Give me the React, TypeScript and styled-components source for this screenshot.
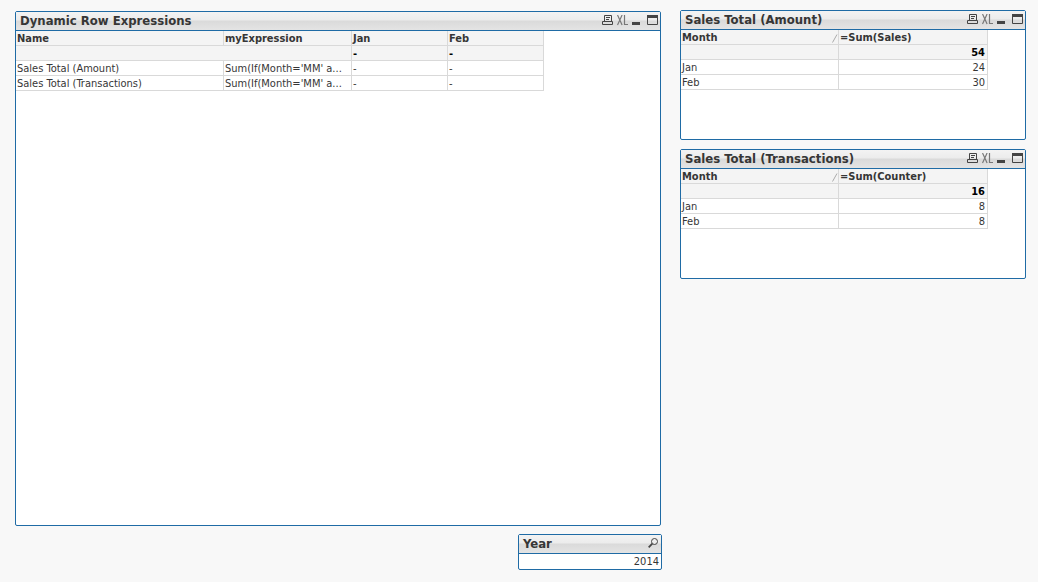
import React from "react";
import styled, { createGlobalStyle } from "styled-components";

const Global = createGlobalStyle`
  * { box-sizing: border-box; }
  body {
    margin: 0;
    background: #f8f8f8;
    color: #363636;
    font: 11px/14px "DejaVu Sans Condensed", "DejaVu Sans", Tahoma, sans-serif;
  }
`;

const Sheet = styled.main`
  display: grid;
  grid-template-columns: 647fr 346fr;
  gap: 18px;
  min-height: 100vh;
  padding: 10px 12px 12px 15px;
`;

const MainColumn = styled.div`
  display: flex;
  flex-direction: column;
  gap: 8px;
  min-width: 0;
  padding-top: 1px;
`;

const SideColumn = styled.div`
  display: flex;
  flex-direction: column;
  gap: 9px;
  min-width: 0;
`;

const Panel = styled.section<{ $grow?: boolean }>`
  display: flex;
  flex-direction: column;
  flex: ${(p) => (p.$grow ? "1" : "none")};
  min-height: 130px;
  margin-right: ${(p) => (p.$grow ? "1px" : "0")};
  background: #ffffff;
  border: 1px solid #1f6ba5;
  border-radius: 2px;
`;

const ListBox = styled.section`
  align-self: flex-end;
  width: 144px;
  background: #ffffff;
  border: 1px solid #1f6ba5;
  border-radius: 2px;
`;

const Caption = styled.header`
  display: flex;
  align-items: center;
  justify-content: space-between;
  height: 19px;
  padding: 0 2px 0 4px;
  border-bottom: 1px solid #1f6ba5;
  background: linear-gradient(#f3f3f3 0, #ececec 8px, #dadada 9px, #e4e4e4 100%);
`;

const Title = styled.h2`
  margin: 0;
  font-size: 13px;
  line-height: 18px;
  font-weight: 700;
  white-space: nowrap;
`;

const Tools = styled.div`
  display: flex;
  align-items: center;
  gap: 4px;
`;

const IconButton = styled.button`
  display: block;
  padding: 0 0 1px;
  border: 0;
  background: none;
  color: #444444;
  cursor: pointer;

  svg { display: block; }
`;

const Table = styled.table`
  table-layout: fixed;
  border-collapse: separate;
  border-spacing: 0;
  width: 0;
`;

const Row = styled.tr<{ $shaded?: boolean }>`
  height: 15px;
  background: ${(p) => (p.$shaded ? "#f4f4f4" : "#ffffff")};
`;

const cell = `
  height: 15px;
  padding: 2px 2px 0 1px;
  border-right: 1px solid #d9d9d9;
  border-bottom: 1px solid #d9d9d9;
  line-height: 12px;
  overflow: hidden;
  white-space: nowrap;
`;

const HeadCell = styled.th<{ $sorted?: boolean }>`
  ${cell}
  padding-right: ${(p) => (p.$sorted ? "0" : "2px")};
  text-align: left;
  font-weight: 700;
`;

const HeadContent = styled.div`
  display: flex;
  align-items: center;
  justify-content: space-between;
`;

const Cell = styled.td<{ $align?: "right"; $total?: boolean }>`
  ${cell}
  text-align: ${(p) => p.$align ?? "left"};
  font-weight: ${(p) => (p.$total ? 700 : 400)};
  color: ${(p) => (p.$total ? "#000000" : "inherit")};
`;

const Option = styled.button`
  display: block;
  width: 100%;
  height: 15px;
  padding: 0 2px;
  border: 0;
  background: none;
  color: inherit;
  font: inherit;
  text-align: right;
`;

const PrintIcon = () => (
  <svg width="11" height="11" viewBox="0 0 11 11" fill="none" stroke="currentColor">
    <path d="M2.5 7V.5h7V7M4 2.5h4M4 4.5h3M.5 9.500V6.500h10v3z" />
  </svg>
);

const ExcelIcon = () => (
  <svg width="11" height="11" viewBox="0 0 11 11" fill="none" stroke="#777777" strokeWidth="1.200">
    <path d="M.5 0l4.600 10M5.100 0L.5 10M7.500 0v9.500H11" />
  </svg>
);

const MinimizeIcon = () => (
  <svg width="11" height="11" viewBox="0 0 11 11" fill="currentColor">
    <path d="M0 7h8v3H0z" />
  </svg>
);

const MaximizeIcon = () => (
  <svg width="11" height="11" viewBox="0 0 11 11">
    <path d="M.5 0v9.500h10V0z" fill="none" stroke="currentColor" />
    <path d="M0 0h11v3H0z" fill="currentColor" />
  </svg>
);

const SearchIcon = () => (
  <svg width="11" height="11" viewBox="0 0 11 11" fill="none" stroke="currentColor">
    <circle cx="6.500" cy="3.500" r="3" />
    <path d="M4.300 5.700L.7 9.300" strokeWidth="1.800" />
  </svg>
);

const SortIcon = () => (
  <svg width="6" height="9" viewBox="0 0 6 9" fill="none" stroke="#aaaaaa" aria-hidden="true">
    <path d="M.5 8.500L5 .5" />
  </svg>
);

const WindowTools = () => (
  <Tools>
    <IconButton aria-label="Print"><PrintIcon /></IconButton>
    <IconButton aria-label="Send to Excel"><ExcelIcon /></IconButton>
    <IconButton aria-label="Minimize"><MinimizeIcon /></IconButton>
    <IconButton aria-label="Maximize"><MaximizeIcon /></IconButton>
  </Tools>
);

const expressions = ["Sales Total (Amount)", "Sales Total (Transactions)"];

const ExpressionsTable = () => (
  <Table>
    <colgroup>
      <col style={{ width: 208 }} />
      <col style={{ width: 128 }} />
      <col style={{ width: 96 }} />
      <col style={{ width: 96 }} />
    </colgroup>
    <thead>
      <Row $shaded>
        {["Name", "myExpression", "Jan", "Feb"].map((h) => (
          <HeadCell key={h} scope="col">{h}</HeadCell>
        ))}
      </Row>
    </thead>
    <tbody>
      <Row $shaded>
        <Cell colSpan={2} />
        <Cell $total>-</Cell>
        <Cell $total>-</Cell>
      </Row>
      {expressions.map((name) => (
        <Row key={name}>
          <Cell>{name}</Cell>
          <Cell>Sum(If(Month='MM' a...</Cell>
          <Cell>-</Cell>
          <Cell>-</Cell>
        </Row>
      ))}
    </tbody>
  </Table>
);

type TotalsProps = {
  title: string;
  measure: string;
  total: number;
  rows: [string, number][];
};

const TotalsPanel = ({ title, measure, total, rows }: TotalsProps) => (
  <Panel>
    <Caption>
      <Title>{title}</Title>
      <WindowTools />
    </Caption>
    <Table>
      <colgroup>
        <col style={{ width: 158 }} />
        <col style={{ width: 149 }} />
      </colgroup>
      <thead>
        <Row $shaded>
          <HeadCell scope="col" $sorted>
            <HeadContent>Month<SortIcon /></HeadContent>
          </HeadCell>
          <HeadCell scope="col">{measure}</HeadCell>
        </Row>
      </thead>
      <tbody>
        <Row $shaded>
          <Cell />
          <Cell $align="right" $total>{total}</Cell>
        </Row>
        {rows.map(([month, value]) => (
          <Row key={month}>
            <Cell>{month}</Cell>
            <Cell $align="right">{value}</Cell>
          </Row>
        ))}
      </tbody>
    </Table>
  </Panel>
);

export default function App() {
  return (
    <>
      <Global />
      <Sheet>
        <MainColumn>
          <Panel $grow>
            <Caption>
              <Title>Dynamic Row Expressions</Title>
              <WindowTools />
            </Caption>
            <ExpressionsTable />
          </Panel>
          <ListBox>
            <Caption>
              <Title>Year</Title>
              <IconButton aria-label="Search Year"><SearchIcon /></IconButton>
            </Caption>
            <Option>2014</Option>
          </ListBox>
        </MainColumn>
        <SideColumn>
          <TotalsPanel title="Sales Total (Amount)" measure="=Sum(Sales)" total={54} rows={[["Jan", 24], ["Feb", 30]]} />
          <TotalsPanel title="Sales Total (Transactions)" measure="=Sum(Counter)" total={16} rows={[["Jan", 8], ["Feb", 8]]} />
        </SideColumn>
      </Sheet>
    </>
  );
}
